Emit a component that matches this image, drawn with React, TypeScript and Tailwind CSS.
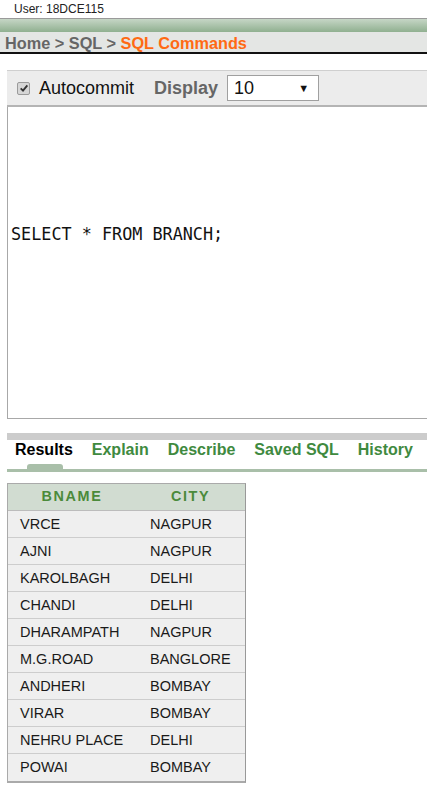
const rows: [string, string][] = [
  ["VRCE", "NAGPUR"],
  ["AJNI", "NAGPUR"],
  ["KAROLBAGH", "DELHI"],
  ["CHANDI", "DELHI"],
  ["DHARAMPATH", "NAGPUR"],
  ["M.G.ROAD", "BANGLORE"],
  ["ANDHERI", "BOMBAY"],
  ["VIRAR", "BOMBAY"],
  ["NEHRU PLACE", "DELHI"],
  ["POWAI", "BOMBAY"],
];

const tabs = ["Explain", "Describe", "Saved SQL", "History"];

export default function App() {
  return (
    <div className="w-[427px] h-[790px] overflow-hidden bg-white font-['Liberation_Sans',Arial,sans-serif] text-[#222]">
      <div className="h-[18px] pl-[14px] pt-[3px] text-[12px] leading-[13px]">User: 18DCE115</div>
      <div className="h-px bg-[#9a9a9a]" />
      <div className="h-[13px] bg-gradient-to-b from-[#c6d6c6] to-[#90b090]" />
      <div className="h-[22px] bg-[#e4e6e4] border-b-2 border-[#111] pl-[5px] pt-[2px] text-[16.3px] leading-[18px] font-bold text-[#666]">
        Home &gt; SQL &gt; <span className="text-[#ff6a13]">SQL Commands</span>
      </div>

      <div className="mt-[16px] ml-[7px]">
        <div className="h-[37px] bg-[#ececec] border-t border-[#cfcfcf] border-b-2 border-b-[#b4b4b4] flex items-center">
          <span className="ml-[10px] w-[13px] h-[13px] rounded-[2px] bg-[#d6d6d6] border border-[#9a9a9a] flex items-center justify-center">
            <svg viewBox="0 0 12 12" className="w-[10px] h-[10px]">
              <path d="M2 6.5 L4.8 9.2 L10 2.8" fill="none" stroke="#333" strokeWidth="2.2" />
            </svg>
          </span>
          <span className="ml-[9px] text-[18px] leading-[20px] text-[#111]">Autocommit</span>
          <span className="ml-[20px] text-[18px] leading-[20px] font-bold text-[#666]">Display</span>
          <span className="ml-[9px] w-[92px] h-[26px] bg-white border border-[#a0a0a0] flex items-center justify-between px-[6px] text-[18px] text-[#111]">
            <span>10</span>
            <span className="text-[11px] mr-[3px]">▼</span>
          </span>
        </div>
        <div className="h-[312px] border-l border-b border-[#a8a8a8] pl-[3px] pt-[117px] font-['DejaVu_Sans_Mono',monospace] text-[16.8px] leading-[20px] text-[#111]">
          SELECT * FROM BRANCH;
        </div>

        <div className="mt-[14px] h-[7px] bg-[#cccccc]" />
        <div className="relative flex items-end h-[19px] text-[16px] leading-[18px] font-bold">
          <span className="ml-[8px] text-black">Results</span>
          {tabs.map((t) => (
            <span key={t} className="ml-[19px] text-[#3f8a3f]">{t}</span>
          ))}
          <span className="absolute left-[20px] bottom-[-10px] w-[36px] h-[5px] rounded-t-[3px] bg-[#a9bfa9]" />
        </div>
        <div className="mt-[10px] h-[3px] bg-[#a9bfa9]" />

        <div className="mt-[11px] w-[239px] border border-[#aaaaaa] border-r-[#999] border-b-2 border-b-[#aaa]">
          <div className="grid grid-cols-[130px_1fr] h-[27px] items-center bg-[#d1dcd1] text-[14.4px] font-bold tracking-[1.6px] text-[#4b8a3b] border-b border-[#bcbcbc]">
            <span className="text-center pr-[2px]">BNAME</span>
            <span className="text-center pr-[2px]">CITY</span>
          </div>
          {rows.map(([b, c]) => (
            <div key={b} className="grid grid-cols-[130px_1fr] h-[27px] items-center bg-[#efefef] border-b border-[#cdcdcd] last:border-b-0 text-[14.5px] text-[#1a1a1a]">
              <span className="pl-[12px] pt-px">{b}</span>
              <span className="pl-[12px] pt-px">{c}</span>
            </div>
          ))}
        </div>
      </div>
    </div>
  );
}
